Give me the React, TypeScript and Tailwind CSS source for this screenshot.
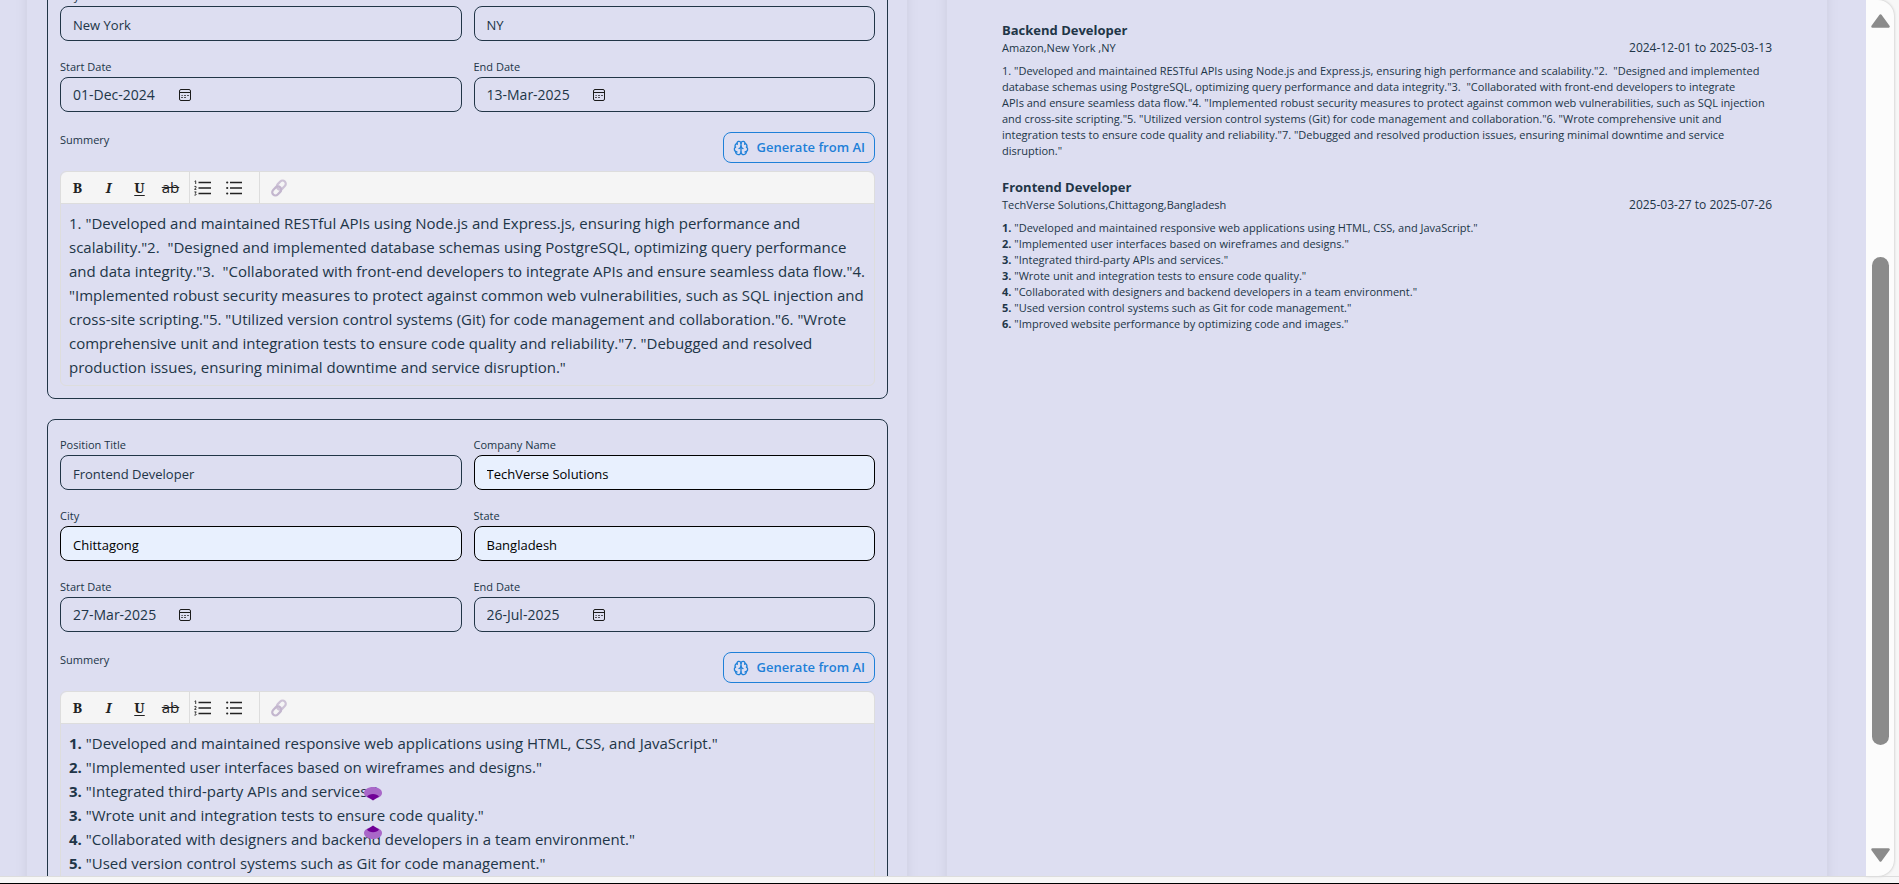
import { Brain } from "lucide-react";

type Field = { label: string; value: string; filled?: boolean };
type Line = { n?: string; text: string };

const BACKEND_EDITOR: Line[] = [
  { text: '1. "Developed and maintained RESTful APIs using Node.js and Express.js, ensuring high performance and' },
  { text: 'scalability."2.  "Designed and implemented database schemas using PostgreSQL, optimizing query performance' },
  { text: 'and data integrity."3.  "Collaborated with front-end developers to integrate APIs and ensure seamless data flow."4.' },
  { text: '"Implemented robust security measures to protect against common web vulnerabilities, such as SQL injection and' },
  { text: 'cross-site scripting."5. "Utilized version control systems (Git) for code management and collaboration."6. "Wrote' },
  { text: 'comprehensive unit and integration tests to ensure code quality and reliability."7. "Debugged and resolved' },
  { text: 'production issues, ensuring minimal downtime and service disruption."' },
];

const BACKEND_PREVIEW: Line[] = [
  { text: '1. "Developed and maintained RESTful APIs using Node.js and Express.js, ensuring high performance and scalability."2.  "Designed and implemented' },
  { text: 'database schemas using PostgreSQL, optimizing query performance and data integrity."3.  "Collaborated with front-end developers to integrate' },
  { text: 'APIs and ensure seamless data flow."4. "Implemented robust security measures to protect against common web vulnerabilities, such as SQL injection' },
  { text: 'and cross-site scripting."5. "Utilized version control systems (Git) for code management and collaboration."6. "Wrote comprehensive unit and' },
  { text: 'integration tests to ensure code quality and reliability."7. "Debugged and resolved production issues, ensuring minimal downtime and service' },
  { text: 'disruption."' },
];

const FRONTEND: Line[] = [
  { n: "1.", text: '"Developed and maintained responsive web applications using HTML, CSS, and JavaScript."' },
  { n: "2.", text: '"Implemented user interfaces based on wireframes and designs."' },
  { n: "3.", text: '"Integrated third-party APIs and services."' },
  { n: "3.", text: '"Wrote unit and integration tests to ensure code quality."' },
  { n: "4.", text: '"Collaborated with designers and backend developers in a team environment."' },
  { n: "5.", text: '"Used version control systems such as Git for code management."' },
  { n: "6.", text: '"Improved website performance by optimizing code and images."' },
];

function Lines({ lines }: { lines: Line[] }) {
  return (
    <>
      {lines.map((l, i) => (
        <div key={i} className="whitespace-pre">
          {l.n && <b>{l.n} </b>}
          {l.text}
        </div>
      ))}
    </>
  );
}

function TextField({ id, label, value, filled }: Field & { id: string }) {
  return (
    <div>
      <label htmlFor={id} className="block pt-0.5 text-[11px] leading-[21px]">{label}</label>
      <input
        id={id}
        defaultValue={value}
        className={
          filled
            ? "block h-[35px] w-full rounded-lg border border-black bg-[#e8f0fe] px-3 pt-0.5 text-[13px] text-black outline-none"
            : "block h-[35px] w-full rounded-lg border border-[#213547] bg-transparent px-3 pt-0.5 text-[13px] outline-none"
        }
      />
    </div>
  );
}

function CalendarIcon() {
  return (
    <svg width="14" height="14" viewBox="0 0 14 14" fill="none" stroke="#1a1a1a">
      <rect x="1.500" y="1.500" width="11" height="11" rx="1.500" strokeWidth="1" />
      <path d="M1.500 4.500h11" strokeWidth="1" />
      <path d="M6.300 7.500h1.400M9.300 7.500h1.400M3.300 9.500h1.400M6.300 9.500h1.400M3.600 7.500h1" strokeWidth="1.200" />
    </svg>
  );
}

function DateField({ id, label, value }: Field & { id: string }) {
  return (
    <div>
      <label htmlFor={id} className="block pt-0.5 text-[11px] leading-[21px]">{label}</label>
      <div className="flex h-[35px] items-center rounded-lg border border-[#213547] px-3">
        <input id={id} defaultValue={value} className="w-[105px] bg-transparent text-[14px] outline-none" />
        <button type="button" aria-label={"Pick " + label}><CalendarIcon /></button>
      </div>
    </div>
  );
}

function Toolbar() {
  const btn = "flex h-[31px] w-[31px] items-center justify-center";
  const serif = "font-['Noto_Serif','DejaVu_Serif','Liberation_Serif',serif] text-[14px]";
  return (
    <div className="flex h-8 rounded-t-md border-b border-[#ddd] bg-[#f5f5f5] pl-px text-[#222]">
      <button type="button" aria-label="Bold" className={btn + " " + serif + " font-bold"}>B</button>
      <button type="button" aria-label="Italic" className={btn + " " + serif + " font-bold italic"}>I</button>
      <button type="button" aria-label="Underline" className={btn + " " + serif + " font-bold underline underline-offset-2"}>U</button>
      <button type="button" aria-label="Strike through" className={btn + " text-[15px] font-medium line-through"}>ab</button>
      <span className="ml-[3px] w-px bg-[#ddd]" />
      <button type="button" aria-label="Numbered list" className="flex w-6 items-center justify-center">
        <svg width="17" height="16" viewBox="0 0 17 16">
          <path d="M4.500 2.500H17M4.500 8H17M4.500 13.500H17" stroke="#222" strokeWidth="1.700" />
          <path d="M.6 1.400 1.700.8V4M.4 6.400h1.600v1.200L.6 9.400h1.800M.4 11.900h1.800l-.9 1.300.9.8-.5 1.100H.4" fill="none" stroke="#222" strokeWidth=".9" />
        </svg>
      </button>
      <button type="button" aria-label="Bullet list" className="flex w-10 items-center justify-center">
        <svg width="16" height="16" viewBox="0 0 16 16">
          <path d="M4 2.500h12M4 8h12M4 13.500h12" stroke="#222" strokeWidth="1.700" />
          <g fill="#222"><circle cx="1.200" cy="2.500" r="1.100" /><circle cx="1.200" cy="8" r="1.100" /><circle cx="1.200" cy="13.500" r="1.100" /></g>
        </svg>
      </button>
      <span className="ml-[5px] w-px bg-[#ddd]" />
      <button type="button" aria-label="Link" className="flex w-[38px] items-center justify-center">
        <svg width="18" height="18" viewBox="0 0 18 18" fill="none" strokeWidth="2.200">
          <rect x="6.300" y="2.900" width="10" height="6.400" rx="3.200" transform="rotate(-45 11.300 6.100)" stroke="#cdc2d6" />
          <rect x="1.700" y="8.700" width="10" height="6.400" rx="3.200" transform="rotate(-45 6.700 11.900)" stroke="#c3b6ce" />
        </svg>
      </button>
    </div>
  );
}

function ExperienceForm({ prefix, fields, dates, lines }: { prefix: string; fields: Field[]; dates: Field[]; lines: Line[] }) {
  return (
    <section className="rounded-lg border border-[#213547] p-3">
      <div className="grid grid-cols-2 gap-x-3 gap-y-[13px]">
        {fields.map((f) => (
          <TextField key={f.label} id={prefix + f.label} {...f} />
        ))}
        {dates.map((f) => (
          <DateField key={f.label} id={prefix + f.label} {...f} />
        ))}
      </div>
      <div className="mt-5 flex items-start justify-between">
        <span id={prefix + "summary"} className="text-[11px] leading-4">Summery</span>
        <button type="button" className="flex h-[31px] items-center gap-2 rounded-lg border border-[#1e80d8] px-[9px] text-[13px] font-semibold text-[#1e80d8]">
          <Brain size={16} strokeWidth={2} />
          Generate from AI
        </button>
      </div>
      <div className="mt-2 rounded-md border border-[#ddd]">
        <Toolbar />
        <div role="textbox" aria-multiline="true" aria-labelledby={prefix + "summary"} className="px-2 pt-[7px] pb-1.5 text-[15px] leading-6">
          <Lines lines={lines} />
        </div>
      </div>
    </section>
  );
}

function PreviewItem({ title, place, dates, lines }: { title: string; place: string; dates: string; lines: Line[] }) {
  return (
    <article className="mb-[18px] text-[11px] leading-4">
      <h2 className="text-[13px] leading-5 font-bold">{title}</h2>
      <p className="flex justify-between"><span>{place}</span><span className="text-xs">{dates}</span></p>
      <div className="mt-[7px]"><Lines lines={lines} /></div>
    </article>
  );
}

function Scrollbar() {
  return (
    <div className="flex w-[28px] shrink-0 flex-col items-center rounded-r-2xl bg-[#fcfcfc] py-[14px] shadow-[0_0_3px_rgba(0,0,0,0.25)]">
      <svg width="19" height="14" viewBox="0 0 19 14"><path d="M9.5 1.5 17.5 12.5h-16z" fill="#8b8b8b" stroke="#8b8b8b" strokeWidth="2.5" strokeLinejoin="round" /></svg>
      <div className="flex w-full flex-1 flex-col items-center">
        <div className="grow-[229]" />
        <div className="w-[17px] grow-[488] rounded-full bg-[#8b8b8b]" />
        <div className="grow-[103]" />
      </div>
      <svg width="19" height="14" viewBox="0 0 19 14"><path d="M9.5 12.5 17.5 1.5h-16z" fill="#8b8b8b" stroke="#8b8b8b" strokeWidth="2.5" strokeLinejoin="round" /></svg>
    </div>
  );
}

function Marker({ className }: { className: string }) {
  return (
    <svg className={className} width="18" height="14" viewBox="0 0 18 14">
      <path d="M0 6C0 2.500 4 0 9 0s9 2.500 9 6-4 5.500-9 5.500S0 9.500 0 6z" fill="#a968c8" />
      <path d="M3 9.500c2-3.500 10-3.500 12 0l-6 4z" fill="#700096" />
    </svg>
  );
}

export default function App() {
  return (
    <div className="flex h-screen flex-col bg-[#f7f7f7] font-['Open_Sans','Noto_Sans',sans-serif] text-[#213547]">
      <div className="mr-[5px] flex min-h-0 flex-1">
        <main className="relative min-w-0 flex-1 overflow-hidden bg-[#dddef1]">
          <div className="-mt-[60px] grid grid-cols-2 gap-10 pr-[39px] pl-[27px]">
            <div className="flex min-w-0 flex-col gap-5 pt-[30px] pr-[19px] pb-10 pl-5 shadow-lg">
              <ExperienceForm
                prefix="backend-"
                fields={[{ label: "City", value: "New York" }, { label: "State", value: "NY" }]}
                dates={[{ label: "Start Date", value: "01-Dec-2024" }, { label: "End Date", value: "13-Mar-2025" }]}
                lines={BACKEND_EDITOR}
              />
              <ExperienceForm
                prefix="frontend-"
                fields={[
                  { label: "Position Title", value: "Frontend Developer" },
                  { label: "Company Name", value: "TechVerse Solutions", filled: true },
                  { label: "City", value: "Chittagong", filled: true },
                  { label: "State", value: "Bangladesh", filled: true },
                ]}
                dates={[{ label: "Start Date", value: "27-Mar-2025" }, { label: "End Date", value: "26-Jul-2025" }]}
                lines={FRONTEND}
              />
            </div>
            <div className="min-w-0 px-[55px] pt-20 shadow-lg">
              <PreviewItem title="Backend Developer" place="Amazon,New York ,NY" dates="2024-12-01 to 2025-03-13" lines={BACKEND_PREVIEW} />
              <PreviewItem title="Frontend Developer" place="TechVerse Solutions,Chittagong,Bangladesh" dates="2025-03-27 to 2025-07-26" lines={FRONTEND} />
            </div>
          </div>
          <Marker className="absolute top-[787px] left-[364px]" />
          <Marker className="absolute top-[825px] left-[364px] rotate-180" />
        </main>
        <Scrollbar />
      </div>
      <div className="h-2 border-t border-b border-t-[#ddd] border-b-black" />
    </div>
  );
}
